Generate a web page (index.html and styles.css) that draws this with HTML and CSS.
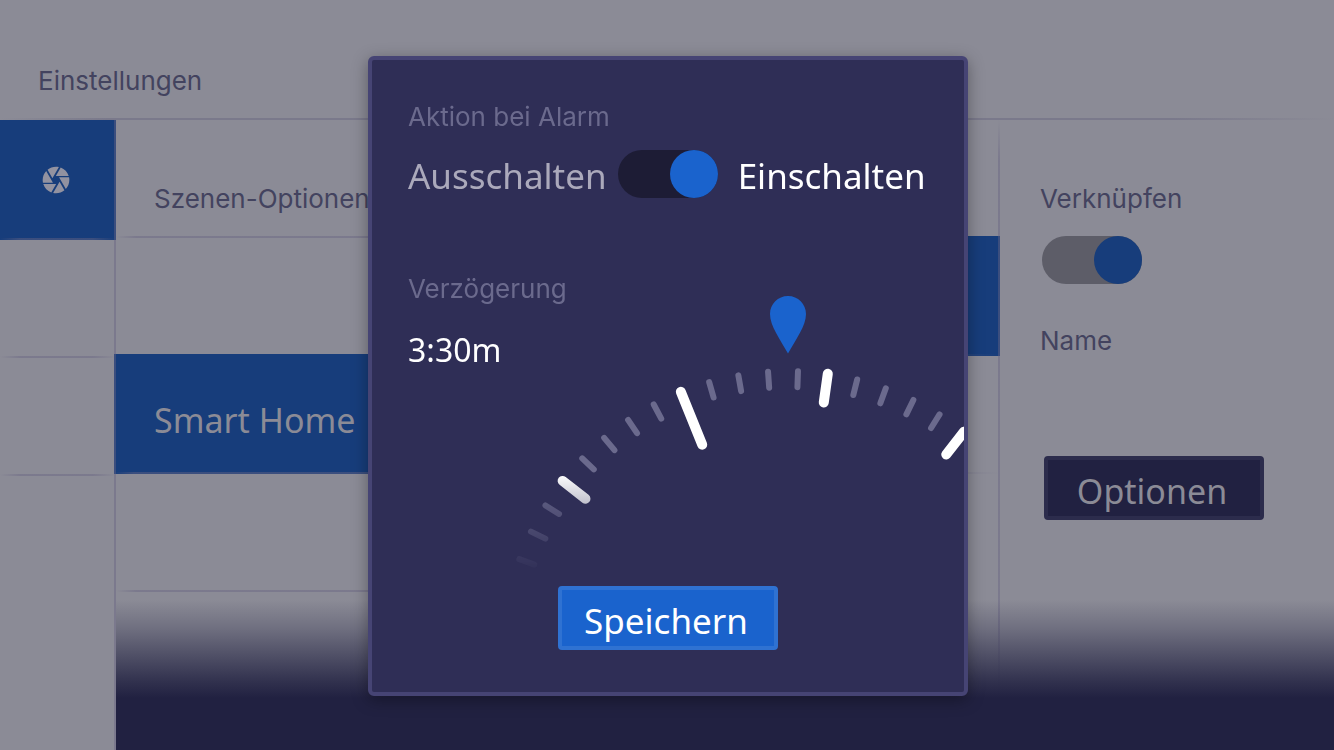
FILE: index.html
```html
<!DOCTYPE html>
<html lang="de">
<head>
<meta charset="utf-8">
<meta name="viewport" content="width=device-width, initial-scale=1">
<title>Einstellungen</title>
<link rel="stylesheet" href="styles.css">
</head>
<body>
<div class="app">
  <header class="header"><h1 class="label">Einstellungen</h1></header>
  <main class="columns">
    <nav class="column sidebar" aria-label="Bereiche">
      <button class="row selected" type="button" aria-label="Szenen">
        <svg class="icon" viewBox="0 0 24 24" aria-hidden="true"><path d="M9.4 10.5l4.77-8.26C13.47 2.09 12.75 2 12 2c-2.4 0-4.6.85-6.32 2.25l3.66 6.35.06-.1zM21.54 9c-.92-2.92-3.15-5.26-6-6.34L11.88 9h9.66zm.26 1h-7.49l.29.5 4.76 8.25C21 16.97 22 14.61 22 12c0-.69-.07-1.35-.2-2zM8.54 12l-3.9-6.75C3.01 7.03 2 9.39 2 12c0 .69.07 1.35.2 2h7.49l-1.15-2zm-6.08 3c.92 2.92 3.15 5.26 6 6.34L12.12 15H2.46zm11.27 0l-3.9 6.76c.7.15 1.42.24 2.17.24 2.4 0 4.6-.85 6.32-2.25l-3.66-6.35-.93 1.6z"/></svg>
      </button>
      <div class="row"></div>
      <div class="row"></div>
    </nav>
    <section class="column options">
      <div class="row"><h2 class="label">Szenen-Optionen</h2></div>
      <div class="row plain"></div>
      <button class="row selected" type="button">Smart Home</button>
      <div class="row"></div>
    </section>
    <section class="column devices">
      <div class="row plain"></div>
      <div class="row selected"></div>
      <div class="row"></div>
    </section>
    <section class="details">
      <label class="label" for="link">Verknüpfen</label>
      <input class="toggle toggle-dim" id="link" type="checkbox" role="switch" checked>
      <h2 class="label">Name</h2>
      <button class="button button-dark" type="button">Optionen</button>
    </section>
  </main>
  <div class="fade"></div>
</div>

<div class="overlay">
  <section class="dialog" role="dialog" aria-modal="true" aria-labelledby="action-title">
    <h2 class="label" id="action-title">Aktion bei Alarm</h2>
    <div class="switch-row">
      <span class="off">Ausschalten</span>
      <input class="toggle" id="action" type="checkbox" role="switch" checked>
      <label for="action">Einschalten</label>
    </div>
    <div class="delay">
      <div class="delay-text">
        <h2 class="label">Verzögerung</h2>
        <output class="value">3:30m</output>
      </div>
      <svg class="dial" viewBox="512 274 452 312" role="img" aria-label="Verzögerung 3:30m">
        <defs>
          <linearGradient id="fade" gradientUnits="userSpaceOnUse" x1="0" y1="474" x2="0" y2="574">
            <stop offset="0" stop-color="#fff"/>
            <stop offset="1" stop-color="#fff" stop-opacity="0"/>
          </linearGradient>
          <mask id="dial-mask" maskUnits="userSpaceOnUse" x="500" y="270" width="480" height="320">
            <rect x="500" y="270" width="480" height="320" fill="url(#fade)"/>
          </mask>
          <path id="minor" d="M0-286V-270"/>
          <path id="half" d="M0-286V-257"/>
          <path id="major" d="M0-286V-229"/>
        </defs>
        <path class="pin" d="M788 296C778 296 770 304 770 314C770 326 780 339 788 353.500C796 339 806 326 806 314C806 304 798 296 788 296Z"/>
        <g mask="url(#dial-mask)">
          <g transform="translate(788 657)">
            <g class="tick">
              <use href="#minor" transform="rotate(-70)"/>
              <use href="#minor" transform="rotate(-64)"/>
              <use href="#minor" transform="rotate(-58)"/>
              <use href="#minor" transform="rotate(-46)"/>
              <use href="#minor" transform="rotate(-40)"/>
              <use href="#minor" transform="rotate(-34)"/>
              <use href="#minor" transform="rotate(-28)"/>
              <use href="#minor" transform="rotate(-16)"/>
              <use href="#minor" transform="rotate(-10)"/>
              <use href="#minor" transform="rotate(-4)"/>
              <use href="#minor" transform="rotate(2)"/>
              <use href="#minor" transform="rotate(14)"/>
              <use href="#minor" transform="rotate(20)"/>
              <use href="#minor" transform="rotate(26)"/>
              <use href="#minor" transform="rotate(32)"/>
            </g>
            <g class="tick tick-strong">
              <use href="#half" transform="rotate(-52)"/>
              <use href="#major" transform="rotate(-22)"/>
              <use href="#half" transform="rotate(8)"/>
              <use href="#half" transform="rotate(38)"/>
            </g>
          </g>
        </g>
      </svg>
    </div>
    <button class="button save" type="button">Speichern</button>
  </section>
</div>
</body>
</html>
```
FILE: styles.css
```css
* { box-sizing: border-box; }

body {
  margin: 0;
  background: #8b8b96;
  font: 35px/48px "Noto Sans", "Open Sans", sans-serif;
  color: #fff;
}

button { font: inherit; cursor: pointer; }

.label {
  margin: 0;
  font: 400 26px/30px Inter, Roboto, sans-serif;
  color: #43435f;
  white-space: nowrap;
}

/* Page behind the dialog */
.app {
  position: relative;
  display: flex;
  flex-direction: column;
  height: 100vh;
  min-height: 640px;
  overflow: hidden;
}

.header {
  flex: none;
  height: 120px;
  padding: 66px 38px 0;
  background: linear-gradient(90deg, transparent, #7a798b 8%, #7a798b 88%, transparent) bottom / 100% 2px no-repeat;
}

.columns {
  flex: 1;
  display: grid;
  grid-template-columns: 116px minmax(0, 442fr) minmax(0, 442fr) minmax(334px, 334fr);
}

.column { position: relative; }

.column::after {
  content: "";
  position: absolute;
  inset: 0 0 0 auto;
  width: 2px;
  background: rgba(104, 100, 130, 0.45);
  z-index: 1;
}

.options::after { content: none; }

.devices::after {
  background: linear-gradient(transparent, rgba(104, 100, 130, 0.45) 40px, rgba(104, 100, 130, 0.45) 80%, transparent 92%);
}

.row {
  display: flex;
  align-items: center;
  width: 100%;
  height: 118px;
  padding: 0 38px;
  border: 0;
  color: #8b8b96;
  font-size: 34px;
  background: linear-gradient(90deg, transparent, rgba(104, 100, 130, 0.45) 20px, rgba(104, 100, 130, 0.45) 80%, transparent) bottom / 100% 2px no-repeat;
}

.plain { background: none; }

.options .row { padding-top: 40px; }

.selected {
  height: 120px;
  margin-top: -2px;
  background-color: #173d7b;
}

.sidebar { padding-top: 2px; }
.sidebar .row { padding: 0 40px; }

.options .selected {
  width: calc(100% + 2px);
  margin-left: -2px;
  padding: 12px 40px 0;
}

.icon {
  flex: none;
  width: 32px;
  height: 32px;
  fill: #9292a0;
}

.details {
  display: flex;
  flex-direction: column;
  align-items: flex-start;
  padding: 64px 40px 0;
}

.details .toggle { margin: 22px 2px 42px; }
.details .button { margin: 100px 4px 0; }

.fade {
  position: absolute;
  inset: auto 0 0 116px;
  height: 150px;
  z-index: 1;
  background: linear-gradient(rgba(33, 33, 65, 0), rgba(33, 33, 65, 0.26) 28px, rgba(33, 33, 65, 0.85) 82px, #212141 98px);
}

/* Controls */
.toggle {
  appearance: none;
  flex: none;
  display: grid;
  align-items: center;
  justify-items: start;
  width: 100px;
  height: 48px;
  margin: 0;
  border-radius: 24px;
  background: #1d1c35;
  cursor: pointer;
}

.toggle::before {
  content: "";
  width: 48px;
  height: 48px;
  border-radius: 50%;
  background: #1a63cd;
}

.toggle:checked { justify-items: end; }
.toggle-dim { background: #5d5d68; }
.toggle-dim::before { background: #173d7b; }

.button {
  width: 220px;
  height: 64px;
  padding: 6px 4px 0 0;
  border: 4px solid #2f72d2;
  border-radius: 4px;
  background: #1a63cd;
  color: #fff;
}

.button-dark {
  border-color: #2c2c4c;
  background: #212141;
  color: #8b8b96;
  font-size: 34px;
}

/* Dialog */
.overlay {
  position: fixed;
  inset: 0;
  z-index: 2;
  display: grid;
  place-items: center;
  padding: 2px 0 0 2px;
}

.dialog {
  display: flex;
  flex-direction: column;
  width: 600px;
  max-width: 100%;
  padding: 42px 0 42px 36px;
  border: 4px solid #464474;
  border-radius: 6px;
  background: #2f2e56;
  box-shadow: 0 4px 16px rgba(0, 0, 0, 0.35);
}

.dialog .label { color: #6b6a8d; }

.switch-row {
  display: flex;
  align-items: center;
  margin-top: 18px;
}

.switch-row .toggle { margin: 0 20px 0 11px; }
.switch-row span,
.switch-row label { padding-top: 2px; margin-bottom: -2px; }
.off { color: #aba9bb; }

.delay {
  display: grid;
  margin-top: 76px;
}

.delay-text,
.dial { grid-area: 1 / 1; }

.value {
  display: block;
  margin-top: 28px;
  font-size: 32px;
  line-height: 36px;
}

.dial {
  display: block;
  justify-self: end;
  width: 452px;
  max-width: 100%;
}

.pin { fill: #1a63cd; }

.tick {
  fill: none;
  stroke: #6b6a8d;
  stroke-width: 6px;
  stroke-linecap: round;
}

.tick-strong {
  stroke: #fff;
  stroke-width: 10px;
}

.save {
  align-self: center;
  margin-right: 36px;
}
```
